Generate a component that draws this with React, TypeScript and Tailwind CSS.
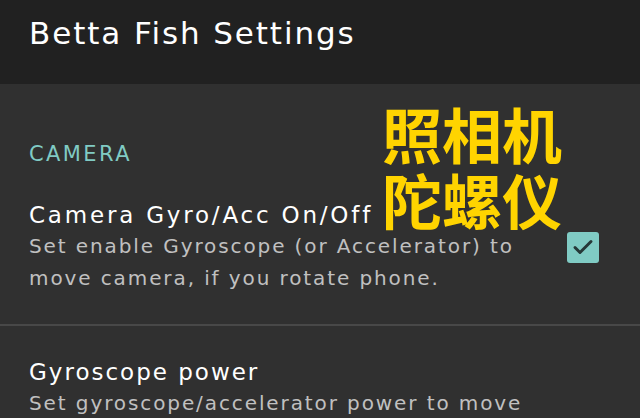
import React from "react";

export default function App() {
  return (
    <div className="relative w-[640px] h-[418px] overflow-hidden bg-[#303030] font-['DejaVu_Sans',sans-serif]">
      <div className="h-[84px] bg-[#212121] flex items-start pl-[29px] pt-[14px]">
        <h1 className="text-[31px] leading-[38px] text-white tracking-[1.9px]">Betta Fish Settings</h1>
      </div>
      <div className="pt-[56px] pl-[29px] text-[21px] leading-[28px] text-[#80cbc4] tracking-[2.4px]">CAMERA</div>
      <div className="flex items-center pl-[29px] pr-[41px] pt-[32px] pb-[30px] border-b-2 border-[#484848]">
        <div className="flex-1">
          <div className="text-[23px] leading-[30px] text-white tracking-[2.8px]">Camera Gyro/Acc On/Off</div>
          <div className="text-[20px] leading-[32px] text-[#c0c0c0] tracking-[1.9px]">
            Set enable Gyroscope (or Accelerator) to
            <br />
            move camera, if you rotate phone.
          </div>
        </div>
        <div className="w-[32px] h-[31px] rounded-[3px] bg-[#80cbc4] flex items-center justify-center">
          <svg width="24" height="24" viewBox="0 0 24 24" fill="none" stroke="#263838" strokeWidth="3" strokeLinecap="round" strokeLinejoin="round">
            <path d="M4 12.5l5 5L20 6.5" />
          </svg>
        </div>
      </div>
      <div className="pl-[29px] pt-[31px]">
        <div className="text-[23px] leading-[30px] text-white tracking-[2px]">Gyroscope power</div>
        <div className="text-[20px] leading-[32px] text-[#c0c0c0] tracking-[1.9px]">Set gyroscope/accelerator power to move</div>
      </div>
      <div className="absolute left-[382px] top-[100px] text-[60px] leading-[66px] font-bold text-[#ffd400] font-['Noto_Sans_CJK_SC',sans-serif]">
        照相机
        <br />
        陀螺仪
      </div>
    </div>
  );
}
